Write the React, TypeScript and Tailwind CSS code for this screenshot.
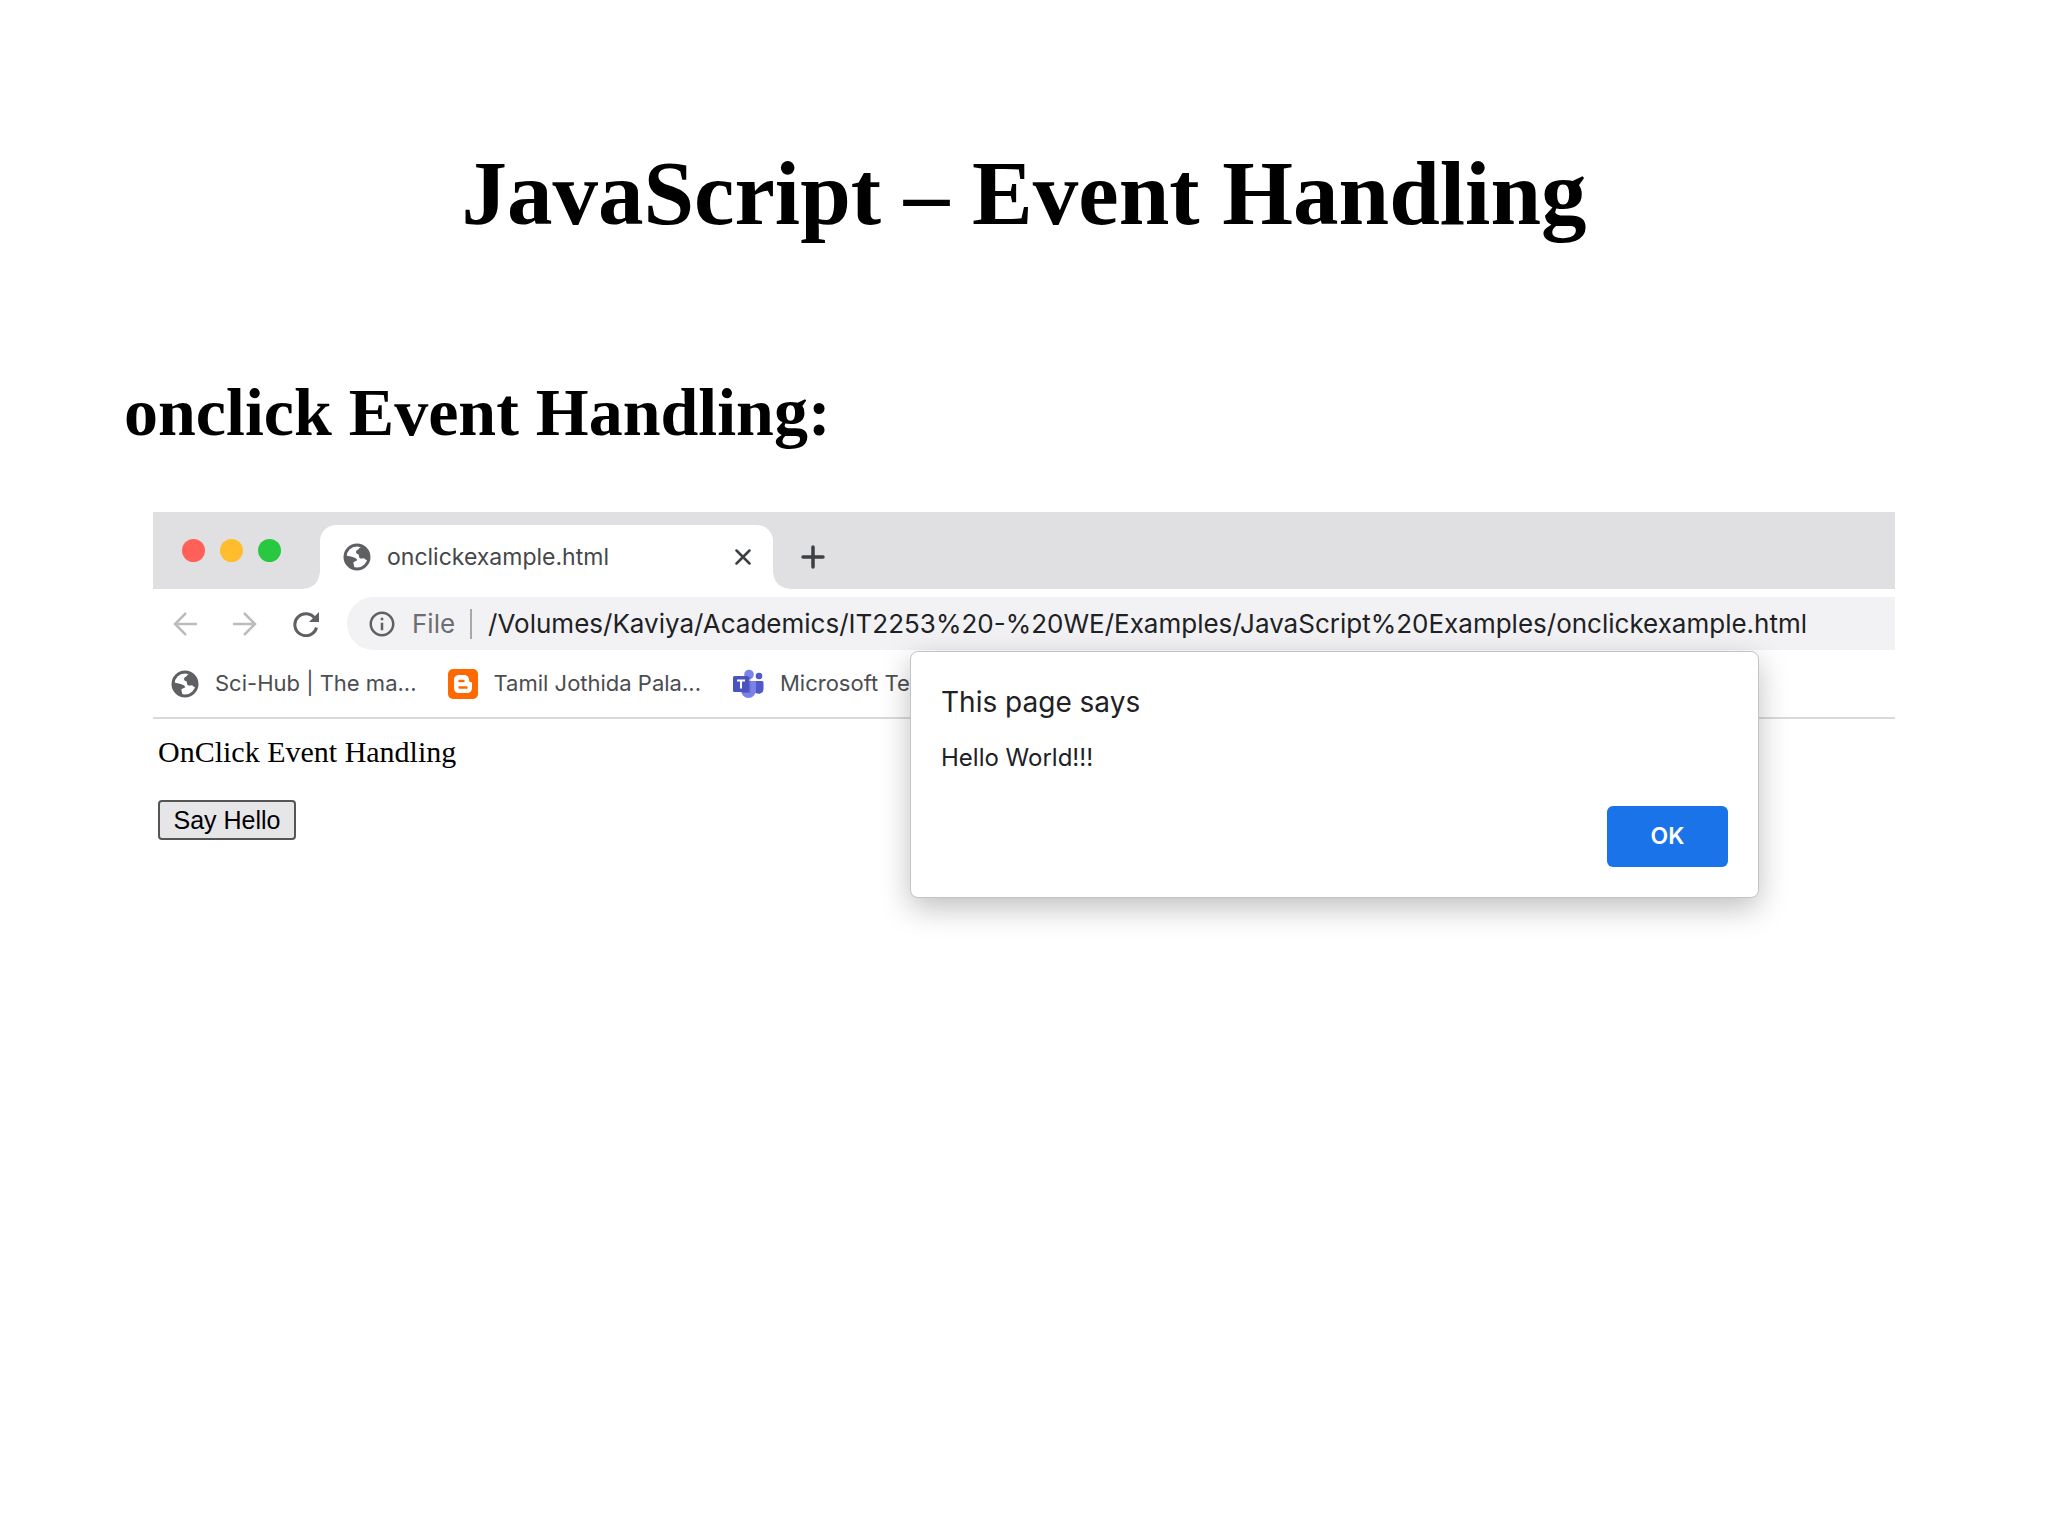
import React from "react";
import { MdInfoOutline } from "react-icons/md";

interface BookmarkProps {
  icon: React.ReactNode;
  label: string;
}

const Globe = () => (
  <svg viewBox="0 0 28 28" className="size-7 shrink-0" fill="none">
    <circle cx="14" cy="14" r="12" stroke="#5f6063" strokeWidth="3" />
    <path
      fill="#5f6063"
      d="M14 1.500c2 0 4 .5 5.800 1.500C18.500 4.500 16.500 4 16 5.500c-.5 1.500-3 1.500-3 3.500s1.500 1.500 2.500 2.500 0 3.500 2 4 3.500-1 4.500.500 2.500 1 4.500-.5A13 13 0 0 0 14 1.500ZM2 12c2.500 1 6.500 1.500 9 2.500 1.500.5 3 1 3 2.500 0 1.500-3 1-3.500 2.500s1.500 3 .5 6.500C5 25 1 19 2 12Z"
    />
  </svg>
);

const Blogger = () => (
  <svg viewBox="0 0 30 30" className="size-[30px] shrink-0">
    <rect width="30" height="30" rx="5" fill="#ff6a00" />
    <path
      fill="#fff"
      d="M11 6h5c3.500 0 5 2.500 5 4.500 0 1.500.3 2.500 1.500 2.500 1 0 1.500.5 1.500 1.500V19c0 3-2 5-5 5h-8c-3 0-5-2-5-5v-8c0-3 2-5 5-5Z"
    />
    <path stroke="#ff6a00" strokeWidth="2.400" strokeLinecap="round" d="M11.500 12h4M11.500 18.500h7" />
  </svg>
);

const Teams = () => (
  <svg viewBox="0 0 32 30" className="h-[30px] w-8 shrink-0">
    <circle cx="27" cy="7" r="3.300" fill="#5059c9" />
    <path fill="#5059c9" d="M22 12h8a1.500 1.500 0 0 1 1.500 1.500V20a5 5 0 0 1-9.500 2Z" />
    <circle cx="17" cy="5.500" r="4.800" fill="#7b83eb" />
    <path fill="#7b83eb" d="M10 12h13a1 1 0 0 1 1 1v8.500a7.500 7.500 0 0 1-15 0V13a1 1 0 0 1 1-1Z" />
    <path fill="#4b53bc" opacity=".5" d="M12 8h6.500v16H10Z" />
    <rect x="1" y="7" width="16" height="16" rx="1.500" fill="#4b53bc" />
    <path stroke="#fff" strokeWidth="2" d="M5 11.500h8M9 11.500v8" />
  </svg>
);

const Bookmark = ({ icon, label }: BookmarkProps) => (
  <a href="#" className="flex items-center gap-4 whitespace-nowrap">
    {icon}
    {label}
  </a>
);

const TabStrip = () => (
  <div className="flex h-[77px] items-end bg-[#e0e0e2]">
    <div className="flex w-[155px] gap-[15px] self-center pl-[29px]">
      <span className="size-[23px] rounded-full bg-[#ff6058]" />
      <span className="size-[23px] rounded-full bg-[#ffbd2e]" />
      <span className="size-[23px] rounded-full bg-[#28c840]" />
    </div>
    <div className="flex items-end">
      <div className="-ml-1 size-4 bg-[radial-gradient(circle_at_0_0,#e0e0e2_15px,#fff_16px)]" />
      <div className="flex h-16 w-[453px] items-center rounded-t-2xl bg-white pr-[22px] pl-[23px]">
        <Globe />
        <span className="ml-4 grow text-[23px] text-[#45474a]">onclickexample.html</span>
        <button aria-label="Close tab">
          <svg viewBox="0 0 16 16" className="size-4" stroke="#3c4043" strokeWidth="2.500" strokeLinecap="round">
            <path d="M1.500 1.500l13 13M14.500 1.500l-13 13" />
          </svg>
        </button>
      </div>
      <div className="size-4 bg-[radial-gradient(circle_at_100%_0,#e0e0e2_15px,#fff_16px)]" />
    </div>
    <button aria-label="New tab" className="mb-5 ml-3">
      <svg viewBox="0 0 24 24" className="size-6" stroke="#3c4043" strokeWidth="3.500" strokeLinecap="round">
        <path d="M12 2v20M2 12h20" />
      </svg>
    </button>
  </div>
);

const Toolbar = () => (
  <div className="flex items-center pt-2 pl-5">
    <button aria-label="Back">
      <svg viewBox="0 0 24 24" className="size-6" fill="none" stroke="#babcbe" strokeWidth="2.500">
        <path d="M24 12H2M13 1L2 12l11 11" />
      </svg>
    </button>
    <button aria-label="Forward" className="ml-9">
      <svg viewBox="0 0 24 24" className="size-6" fill="none" stroke="#babcbe" strokeWidth="2.500">
        <path d="M0 12h22M11 1l11 11-11 11" />
      </svg>
    </button>
    <button aria-label="Reload" className="ml-9">
      <svg viewBox="0 0 26 26" className="size-[26px]" fill="none">
        <path stroke="#5f6063" strokeWidth="3" d="M22 7.500A11 11 0 1 0 23.500 16.500" />
        <path fill="#5f6063" d="M26 1v10H16Z" />
      </svg>
    </button>
    <div className="ml-7 flex h-[53px] min-w-0 grow items-center rounded-l-full bg-[#f2f2f4] pl-5 text-[26px]">
      <MdInfoOutline className="size-[30px] shrink-0 text-[#5f6063]" />
      <span className="ml-[15px] text-[#6b6e72]">File</span>
      <span className="ml-[15px] h-[30px] w-0.5 shrink-0 bg-[#a5a8ac]" />
      <input
        aria-label="Address"
        readOnly
        value="/Volumes/Kaviya/Academics/IT2253%20-%20WE/Examples/JavaScript%20Examples/onclickexample.html"
        className="ml-4 min-w-0 grow bg-transparent text-[#202124] outline-none"
      />
    </div>
  </div>
);

const Dialog = () => (
  <div
    role="dialog"
    aria-label="This page says"
    className="absolute top-[139px] right-[136px] w-[849px] rounded-lg border border-[#c4c4c6] bg-white px-[30px] pt-8 pb-[30px] text-[#202124] shadow-[0_10px_30px_rgba(0,0,0,0.25)]"
  >
    <h3 className="text-[28px] leading-9">This page says</h3>
    <p className="mt-[22px] text-2xl leading-8">Hello World!!!</p>
    <button className="mt-8 ml-auto block h-[61px] w-[121px] rounded-md bg-[#1a73e8] text-[23px] font-semibold text-white">
      OK
    </button>
  </div>
);

const Browser = () => (
  <div className="relative mx-[153px] mt-[60px] font-['Inter',sans-serif]">
    <TabStrip />
    <Toolbar />
    <nav className="flex h-[69px] items-center gap-[31px] overflow-hidden border-b-2 border-[#d9dadc] pl-[18px] text-[22px] text-[#4b4d51]">
      <Bookmark icon={<Globe />} label="Sci-Hub | The ma..." />
      <Bookmark icon={<Blogger />} label="Tamil Jothida Pala..." />
      <Bookmark icon={<Teams />} label="Microsoft Teams" />
    </nav>
    <div className="px-[5px] pt-[15px] text-black">
      <p className="font-['Liberation_Serif',serif] text-[30px] leading-9">OnClick Event Handling</p>
      <button className="mt-[30px] h-10 w-[138px] rounded-sm border-2 border-[#555] bg-[#e6e6e8] font-['Liberation_Sans',sans-serif] text-[25px] leading-8">
        Say Hello
      </button>
    </div>
    <Dialog />
  </div>
);

const App = () => {
  return (
    <main className="min-h-screen bg-white text-black">
      <div className="pt-[142px] font-['Liberation_Serif',serif] font-bold">
        <h1 className="text-center text-[91px] leading-[104px]">JavaScript – Event Handling</h1>
        <h2 className="mx-[124px] mt-[126px] text-[68px] leading-[80px]">onclick Event Handling:</h2>
      </div>
      <Browser />
    </main>
  );
};

export default App;
